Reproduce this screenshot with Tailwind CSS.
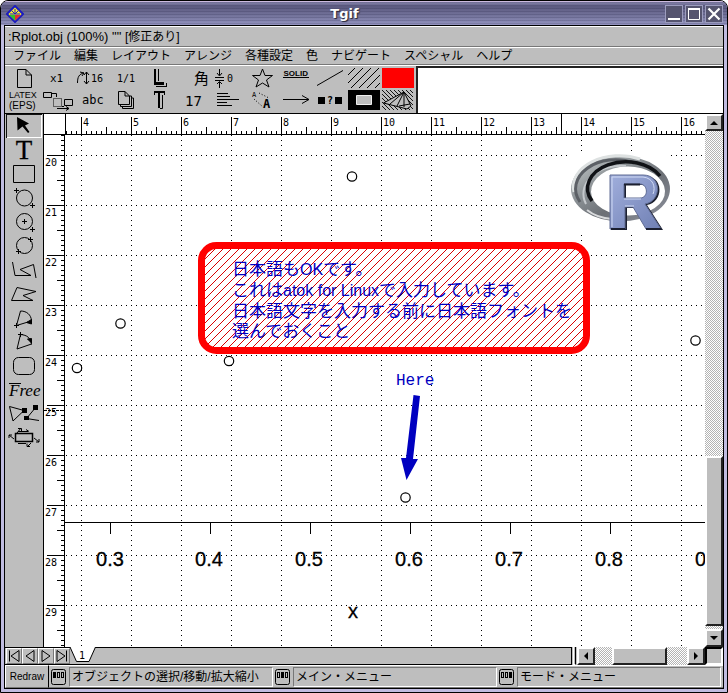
<!DOCTYPE html>
<html lang="ja">
<head>
<meta charset="utf-8">
<title>Tgif</title>
<script src="https://cdn.jsdelivr.net/npm/@tailwindcss/browser@4"></script>
</head>
<body class="bg-white font-['Liberation_Sans','Noto_Sans_CJK_JP',sans-serif] text-black">
<div class="flex h-screen flex-col overflow-hidden rounded-t-lg border border-black bg-[#c0bce0]">

<!-- title bar -->
<header class="flex h-6 shrink-0 items-center border-t border-[#cdbbe0] bg-[repeating-linear-gradient(to_bottom,#00002022_0_1px,transparent_1px_3px),linear-gradient(to_bottom,#8886ae,#5c5a80_20%,#74749c_60%,#9494c0)] px-1">
  <svg class="ml-px h-[18px] w-[18px] shrink-0" viewBox="0 0 18 18"><path d="M9 1L17 9L9 17L1 9Z" fill="#f8ec30" stroke="#1c1cc0" stroke-width="2"/><path d="M3 10H9V15.500Z" fill="#30c030"/><path d="M9 10H15L9 15.500Z" fill="#e03030"/><path d="M9 4V9M4 9H14M6 6L9 9L12 6" fill="none" stroke="#1c1cc0"/></svg>
  <h1 class="flex-1 text-center font-['DejaVu_Sans',sans-serif] text-[13px] leading-5 font-bold text-white [text-shadow:1px_1px_1px_#223]">Tgif</h1>
  <div class="flex gap-0.5">
    <button aria-label="Minimize" class="h-[18px] w-[18px] border border-[#9c9cbe] bg-[#55546f]"><svg viewBox="0 0 16 16"><path d="M2 13H14" stroke="#fff" stroke-width="2"/></svg></button>
    <button aria-label="Maximize" class="h-[18px] w-[18px] border border-[#9c9cbe] bg-[#55546f]"><svg viewBox="0 0 16 16"><path d="M2.500 3H13.500V13.500H2.500Z" fill="none" stroke="#fff"/><path d="M2 3H14" stroke="#fff" stroke-width="2"/></svg></button>
    <button aria-label="Close" class="h-[18px] w-[18px] border border-[#9c9cbe] bg-[#55546f]"><svg viewBox="0 0 16 16"><path d="M2.500 2.500L13.500 13.500M13.500 2.500L2.500 13.500" stroke="#fff" stroke-width="2.200"/></svg></button>
  </div>
</header>

<div class="mx-[3px] mb-[3px] flex min-h-0 flex-1 flex-col border border-black bg-[#bebebe]">

  <div class="flex h-[21px] shrink-0 items-center border-t border-b border-t-white border-b-[#777] px-[3px] text-[13px] whitespace-pre">:Rplot.obj (100%) "" <span class="text-xs">[修正あり]</span></div>

  <nav class="flex h-[18px] shrink-0 items-center gap-[13px] border-t border-b border-t-white border-b-[#777] px-2 text-xs">
    <button>ファイル</button><button>編集</button><button>レイアウト</button><button>アレンジ</button><button>各種設定</button><button>色</button><button>ナビゲート</button><button>スペシャル</button><button>ヘルプ</button>
  </nav>

  <!-- choice icons and message area -->
  <div class="flex h-12 shrink-0 border-t border-white">
    <div class="grid shrink-0 grid-cols-[repeat(12,34px)] content-start pt-px pl-0.5 pr-px font-['DejaVu_Sans_Mono',monospace] [&_svg]:block [&_svg]:h-[22px] [&_svg]:w-[34px] [&_svg]:overflow-visible">
      <button aria-label="New"><svg viewBox="7 67 34 22" fill="none" stroke="#000"><path d="M17.500 69.500H26L31.500 75V87.500H17.500ZM26 69.500V75H31.500"/></svg></button>
      <button aria-label="Zoom"><svg viewBox="41 67 34 22"><text x="50" y="82" font-size="11">x1</text></svg></button>
      <button aria-label="Move"><svg viewBox="75 67 34 22"><path d="M77.500 83C77.500 77 79 74 84 73M80 72L84 73L82 76M86.500 72V84M84 75L86.500 72L89 75M84 81L86.500 84L89 81" fill="none" stroke="#000"/><text x="91" y="82" font-size="10">16</text></svg></button>
      <button aria-label="Page"><svg viewBox="109 67 34 22"><text x="117" y="82" font-size="10">1/1</text></svg></button>
      <button aria-label="Landscape"><svg viewBox="143 67 34 22"><path d="M154 69H156V82H164V85H154Z"/><path d="M158.500 69V81M156 86.500H167M166.500 83V87" stroke="#000" fill="none"/></svg></button>
      <button aria-label="Font"><svg viewBox="177 67 34 22"><text x="194" y="84" font-size="15" font-family="Noto Sans CJK JP">角</text></svg></button>
      <button aria-label="Vertical space"><svg viewBox="211 67 34 22"><path d="M219.500 69V75M217 73L219.500 76L222 73M215 77.500H224M215 80.500H224M219.500 88V82M217 84L219.500 81.500L222 84" fill="none" stroke="#000"/><text x="227" y="82" font-size="10">0</text></svg></button>
      <button aria-label="Shape"><svg viewBox="245 67 34 22"><path d="M262.500 69L265 75.500H272.500L266.500 80L269 87L262.500 83L256 87L258.500 80L252.500 75.500H260Z" fill="none" stroke="#000"/></svg></button>
      <button aria-label="Line type"><svg viewBox="279 67 34 22"><text x="283.500" y="76" font-size="8" font-weight="bold" font-family="Liberation Sans">SOLID</text><path d="M283 77.500H309" stroke="#000"/></svg></button>
      <button aria-label="Line width"><svg viewBox="313 67 34 22"><path d="M317 85.500L343 70.500" stroke="#000"/></svg></button>
      <button aria-label="Fill pattern"><svg viewBox="347 67 34 22"><path d="M348 75L355 68M348 83L363 68M351 88L371 68M359 88L379 68M367 88L380 75M375 88L380 83" fill="none" stroke="#000"/></svg></button>
      <button aria-label="Color"><svg viewBox="381 67 34 22"><path d="M382 68H414V88H382Z" fill="#f00"/></svg></button>

      <button aria-label="Export format"><svg viewBox="7 89 34 22" font-family="Liberation Sans"><text x="9" y="98" font-size="9">LATEX</text><text x="9" y="109" font-size="10">(EPS)</text></svg></button>
      <button aria-label="Move mode"><svg viewBox="41 89 34 22" fill="none" stroke="#000"><path d="M43.500 92.500H51.500V97.500H43.500ZM52 93.500H56.500V97M64.500 99.500H72.500V105.500H64.500ZM57 108.500H69M66 106.500L69 108.500L66 110.500M62 106.500H64"/><path d="M53.500 98.500H61.500V106.500H53.500Z" stroke-dasharray="1 1"/></svg></button>
      <button aria-label="Text"><svg viewBox="75 89 34 22"><text x="82" y="104" font-size="12">abc</text></svg></button>
      <button aria-label="Stacking"><svg viewBox="109 89 34 22" fill="none" stroke="#000"><path d="M118.500 91.500H125L129.500 96V104.500H118.500ZM125 91.500V96H129.500M120.500 105V106.500H131.500V96H130M122.500 107V108.500H133.500V98H132"/></svg></button>
      <button aria-label="Text orientation"><svg viewBox="143 89 34 22"><path d="M154 91H165V93H154ZM158 91H160V108H158Z"/><path d="M154.500 93V95M164.500 91V95M162.500 95V108.500H160" fill="none" stroke="#000"/></svg></button>
      <button aria-label="Font size"><svg viewBox="177 89 34 22"><text x="185" y="106" font-size="14">17</text></svg></button>
      <button aria-label="Align"><svg viewBox="211 89 34 22"><path d="M217 93.500H228M217 96.500H230M217 99.500H239M217 102.500H227M217 105.500H232" stroke="#000"/></svg></button>
      <button aria-label="Rotate text"><svg viewBox="245 89 34 22"><text x="252" y="97" font-size="7">A</text><text x="263" y="108" font-size="12" font-weight="bold">A</text><path d="M259 93L269 98M254 99L263 107" stroke="#000" stroke-dasharray="1 2"/></svg></button>
      <button aria-label="Arrow style"><svg viewBox="279 89 34 22"><path d="M283 99.500H309M302 95.500L309 99.500L302 103.500" fill="none" stroke="#000"/></svg></button>
      <button aria-label="Dash"><svg viewBox="313 89 34 22"><path d="M318 97H325V104H318ZM335 97H342V104H335Z"/><text x="327" y="104" font-size="10" font-weight="bold">?</text></svg></button>
      <button aria-label="Line pattern"><svg viewBox="347 89 34 22"><path d="M348 90H380V110H348Z"/><path d="M356.500 95.500H371.500V104.500H356.500Z" fill="#bebebe" stroke="#eee"/></svg></button>
      <button aria-label="Pattern"><svg viewBox="381 89 34 22"><defs><pattern id="bk" width="4" height="4" patternUnits="userSpaceOnUse"><path d="M-1 -1L5 5M-1 3L1 5M3 -1L5 1" stroke="#000" stroke-width=".9"/></pattern></defs><path d="M382 90H413V110H382Z" fill="url(#bk)"/><path d="M383.500 103L404 92L411 106L407 109Z" fill="#bebebe" stroke="#000"/><path d="M404 92L390 104M404 92L397 106M404 92V107M399 106L410 104" stroke="#000"/></svg></button>
    </div>
    <div class="flex-1 border-t-2 border-l-2 border-[#222] bg-white"></div>
  </div>

  <div class="flex min-h-0 flex-1 border-t border-black">
    <!-- tool panel -->
    <aside class="flex w-[39px] shrink-0 flex-col border-r border-black pl-px [&_button]:block [&_button]:shrink-0 [&_svg]:block [&_svg]:h-6 [&_svg]:w-9 [&_svg]:overflow-visible">
      <button aria-label="Select" class="w-9 shadow-[inset_1px_1px_0_#111,inset_-1px_-1px_0_#fff]"><svg viewBox="6 114 36 24"><path d="M17 117L29 123.500L25 125.500L29.500 132L28 133L22.500 126.500L17.500 130.500Z"/></svg></button>
      <button aria-label="Text tool"><svg viewBox="6 138 36 24"><text x="24" y="159" font-size="27" text-anchor="middle" font-family="Liberation Serif" stroke="#000" stroke-width=".3">T</text></svg></button>
      <button aria-label="Rectangle"><svg viewBox="6 162 36 24"><path d="M13.500 165.500H34.500V182.500H13.500Z" fill="none" stroke="#000"/></svg></button>
      <button aria-label="Oval by corners"><svg viewBox="6 186 36 24" fill="none" stroke="#000"><circle cx="24.500" cy="198" r="8"/><path d="M14 190.500H19M16.500 188V193M30 205.500H35M32.500 203V208"/></svg></button>
      <button aria-label="Oval by centre"><svg viewBox="6 210 36 24" fill="none" stroke="#000"><circle cx="24.500" cy="221.500" r="8"/><path d="M22 221.500H27M24.500 219V224M30 229.500H35M32.500 227V232"/></svg></button>
      <button aria-label="Oval by edges"><svg viewBox="6 234 36 24" fill="none" stroke="#000"><circle cx="24.500" cy="245.500" r="8"/><path d="M28 239.500H33M30.500 237V242M16 251.500H21M18.500 249V254"/></svg></button>
      <button aria-label="Polyline"><svg viewBox="6 258 36 24" fill="none" stroke="#000"><path d="M12.500 262L15 275.500H31L20 269.500L33.500 264.500L36 278"/></svg></button>
      <button aria-label="Polygon"><svg viewBox="6 282 36 24" fill="none" stroke="#000"><path d="M17 287.500L36 291.500L23 295.500L33 300.500H11.500Z"/></svg></button>
      <button aria-label="Arc by centre"><svg viewBox="6 306 36 24" fill="none" stroke="#000"><path d="M16.500 325.500L20.500 311C27 311 31 315 31.500 320.500M16.500 325.500L28 322M14 325.500H19M16.500 323V328"/><path d="M31.500 324L26.500 322.500L31.500 319.500Z" fill="#000"/></svg></button>
      <button aria-label="Arc by edge"><svg viewBox="6 330 36 24" fill="none" stroke="#000"><path d="M31.500 344L17 349L20.500 334.500C27 335 31 338 31.500 344.500M18 334.500H23M20.500 332V337"/><path d="M27.500 339L31.500 338.500V343Z" fill="#000"/></svg></button>
      <button aria-label="Rounded rectangle"><svg viewBox="6 354 36 24"><rect x="13.500" y="357.500" width="21" height="17" rx="5" fill="none" stroke="#000"/></svg></button>
      <button aria-label="Freehand"><svg viewBox="6 378 36 24"><text x="9" y="396" font-size="17" font-style="italic" font-family="Liberation Serif">Free</text><path d="M9 383.500H21" stroke="#000"/></svg></button>
      <button aria-label="Edit points"><svg viewBox="6 402 36 24"><path d="M9.500 406.500L24 410.500L13 421ZM36 407L26.500 418.500L39 420.500" fill="none" stroke="#000"/><path d="M22 408H27V413H22ZM33 405H38V410H33ZM24 416H29V420H24Z"/></svg></button>
      <button aria-label="Rotate or shear"><svg viewBox="6 426 36 24" fill="none" stroke="#000"><path d="M15.500 433.500H32.500V441.500H15.500Z" stroke-width="1.500"/><path d="M9 435L14 439M9 438V435H12M34 438L39 442M36 442H39V439M18 431.500H28M26 429.500L29 431.500M18 443.500H26M17 433L21 428M18 428.500H21.500V431M27 447L31 443M27 443.500V446.500H30"/></svg></button>
    </aside>

    <div class="flex min-w-0 flex-1 flex-col font-['DejaVu_Sans_Mono',monospace] text-[10px]">
      <!-- horizontal ruler -->
      <div class="flex h-[21px] shrink-0 border-b border-black bg-white">
        <svg class="ml-[21px] h-5 min-w-0 flex-1" shape-rendering="crispEdges">
          <defs><pattern id="hr" x="81" y="114" width="50" height="20" patternUnits="userSpaceOnUse"><path d="M.5 3V20M5.500 17V20M10.500 17V20M15.500 17V20M20.500 17V20M25.500 13V20M30.500 17V20M35.500 17V20M40.500 17V20M45.500 17V20" stroke="#000"/></pattern></defs>
          <g transform="translate(-65 -114)"><rect x="65" y="114" width="3000" height="20" fill="url(#hr)"/><path d="M65.500 114V134M561.500 114V131" stroke="#000"/>
          <text y="126"><tspan x="83">4</tspan><tspan x="133">5</tspan><tspan x="183">6</tspan><tspan x="233">7</tspan><tspan x="283">8</tspan><tspan x="333">9</tspan><tspan x="383">10</tspan><tspan x="433">11</tspan><tspan x="483">12</tspan><tspan x="533">13</tspan><tspan x="583">14</tspan><tspan x="633">15</tspan><tspan x="683">16</tspan></text></g>
        </svg>
      </div>
      <div class="flex min-h-0 flex-1 bg-white">
        <!-- vertical ruler -->
        <svg class="h-full w-[21px] shrink-0" shape-rendering="crispEdges">
          <defs><pattern id="vr" x="44" y="155" width="21" height="50" patternUnits="userSpaceOnUse"><path d="M3 .5H20M17 5.500H20M17 10.500H20M17 15.500H20M17 20.500H20M13 25.500H20M17 30.500H20M17 35.500H20M17 40.500H20M17 45.500H20" stroke="#000"/></pattern></defs>
          <g transform="translate(-44 -135)"><rect x="44" y="135" width="21" height="3000" fill="url(#vr)"/><path d="M64.500 135V3000" stroke="#000"/><path d="M44 410.500H64" stroke="#000" stroke-dasharray="3 1"/>
          <text><tspan x="45" y="166">20</tspan><tspan x="45" y="216">21</tspan><tspan x="45" y="266">22</tspan><tspan x="45" y="316">23</tspan><tspan x="45" y="366">24</tspan><tspan x="45" y="416">25</tspan><tspan x="45" y="466">26</tspan><tspan x="45" y="516">27</tspan><tspan x="45" y="566">28</tspan><tspan x="45" y="616">29</tspan></text></g>
        </svg>
        <!-- drawing -->
        <svg class="h-full min-w-0 flex-1">
          <defs>
            <pattern id="gh" x="66" y="155" width="5" height="50" patternUnits="userSpaceOnUse"><rect width="1" height="1"/></pattern>
            <pattern id="gv" x="81" y="140" width="50" height="5" patternUnits="userSpaceOnUse"><rect width="1" height="1"/></pattern>
            <pattern id="ht" width="8" height="8" patternUnits="userSpaceOnUse"><path d="M7 0h1v1h-1zM6 1h1v1h-1zM5 2h1v1h-1zM4 3h1v1h-1zM3 4h1v1h-1zM2 5h1v1h-1zM1 6h1v1h-1zM0 7h1v1h-1z" fill="#d80000"/></pattern>
            <linearGradient id="ring" x1="0" y1="0" x2="1" y2="1"><stop offset="0" stop-color="#ccd0d0"/><stop offset=".35" stop-color="#8c9296"/><stop offset=".6" stop-color="#6c7076"/><stop offset="1" stop-color="#9094a0"/></linearGradient>
            <linearGradient id="rf" x1="0" y1="0" x2="1" y2="1"><stop offset="0" stop-color="#a0aedc"/><stop offset="1" stop-color="#7080b4"/></linearGradient>
          </defs>
          <g transform="translate(-65 -135)">
            <g shape-rendering="crispEdges"><rect x="65" y="135" width="3000" height="3000" fill="url(#gh)"/><rect x="65" y="135" width="3000" height="3000" fill="url(#gv)"/></g>
            <rect x="568" y="153" width="103" height="82" fill="#fff"/>
            <!-- R emblem -->
            <path fill-rule="evenodd" fill="url(#ring)" d="M571 189A49.500 33 0 0 1 670 189A49.500 32.500 0 0 1 571 189ZM591 192A37 24 0 0 0 665 191A37 25 0 0 0 591 192Z"/>
            <path d="M574 192A46 31 0 0 1 640 159" fill="none" stroke="#dde1e1" stroke-width="3"/>
            <path d="M580 202A40 29 0 0 1 634 163" fill="none" stroke="#5c6066" stroke-width="3"/>
            <path d="M586 204A38 28 0 0 1 626 166" fill="none" stroke="#c4c8cc" stroke-width="2"/>
            <path d="M592 201A36 25 0 0 1 660 176" fill="none" stroke="#101216" stroke-width="3.500"/>
            <path d="M587 210Q597 218 612 219" fill="none" stroke="#d8dadc" stroke-width="2"/>
            <path transform="translate(2 1)" fill-rule="evenodd" fill="#1c2030" d="M610 175H643C662 175 662 201 645 204L661 229H646L633 207H625V229H610ZM624 184V198H640C649 198 648 184 640 184Z"/>
            <path fill-rule="evenodd" fill="url(#rf)" stroke="#606c94" d="M610 175H643C662 175 662 201 645 204L661 229H646L633 207H625V229H610ZM624 184V198H640C649 198 648 184 640 184Z"/>
            <path d="M612 227V177H643C653 178 656 187 653 194M625 206H634M624 199H641" fill="none" stroke="#d0daf4"/>
            <path d="M611 229H625M646 229H661M624 184.500H640" stroke="#1c2030" stroke-width="2"/>

            <path d="M65 522.500H3000M110.500 522V534M210.500 522V534M310.500 522V534M410.500 522V534M510.500 522V534M610.500 522V534" stroke="#000"/>
            <g fill="#fff" stroke="#000" stroke-width="1.200"><circle cx="352" cy="176.500" r="4.700"/><circle cx="120.500" cy="323.500" r="4.700"/><circle cx="77" cy="368" r="4.700"/><circle cx="229" cy="361" r="4.700"/><circle cx="695.500" cy="340.500" r="4.700"/><circle cx="405.500" cy="497.500" r="4.700"/></g>

            <rect x="201.500" y="245.500" width="385" height="105" rx="15" fill="#fff"/>
            <rect x="201.500" y="245.500" width="385" height="105" rx="15" fill="url(#ht)" shape-rendering="crispEdges"/>
            <rect x="201.500" y="245.500" width="385" height="105" rx="15" fill="none" stroke="#f00" stroke-width="7"/>
            <g fill="#0000c0" font-size="17" font-family="Liberation Sans, Noto Sans CJK JP, sans-serif"><text x="232" y="275">日本語も<tspan font-size="16">OK</tspan>です。</text><text x="232" y="296">これは<tspan font-size="16">atok for Linux</tspan>で入力しています。</text><text x="232" y="317">日本語文字を入力する前に日本語フォントを</text><text x="232" y="337">選んでおくこと</text></g>
            <text x="396" y="385" font-size="16" font-family="Liberation Mono, monospace" fill="#0000c0">Here</text>
            <path d="M413.500 395L420 396L413 459H418L406.500 480L401 458H406Z" fill="#0000c0"/>

            <g font-size="20" font-family="Liberation Sans, sans-serif" text-anchor="middle" stroke="#000" stroke-width=".3"><text x="110" y="566">0.3</text><text x="209" y="566">0.4</text><text x="309" y="566">0.5</text><text x="409" y="566">0.6</text><text x="509" y="566">0.7</text><text x="609" y="566">0.8</text><text x="709" y="566">0.9</text><text x="353" y="618">x</text></g>
          </g>
        </svg>
      </div>
    </div>

    <!-- vertical scrollbar -->
    <div class="flex w-[18px] shrink-0 flex-col gap-[3px] bg-[repeating-conic-gradient(#b4b4b4_0_25%,#fff_0_50%)] bg-[length:2px_2px]">
      <button aria-label="Scroll up" class="flex h-[17px] w-[18px] shrink-0 items-center justify-center border-2 border-white border-r-[#222] border-b-[#222] bg-[#bebebe]"><svg class="h-1 w-2" viewBox="0 0 8 4"><path d="M0 4L4 0L8 4Z"/></svg></button>
      <div class="flex-[324]"></div>
      <div class="flex-[168] border-2 border-white border-r-[#222] border-b-[#222] bg-[#bebebe]"></div>
      <button aria-label="Scroll down" class="flex h-[18px] w-[18px] shrink-0 items-center justify-center border-2 border-white border-r-[#222] border-b-[#222] bg-[#bebebe]"><svg class="h-1 w-2" viewBox="0 0 8 4"><path d="M0 0L4 4L8 0Z"/></svg></button>
    </div>
  </div>

  <!-- page tabs and horizontal scrollbar -->
  <div class="flex h-[18px] shrink-0">
    <div class="flex min-w-0 flex-1 border-t border-r border-b border-black pl-px [&_button]:h-4 [&_button]:w-4 [&_button]:border [&_button]:border-white [&_button]:border-r-[#777] [&_button]:border-b-[#777] [&_button_svg]:fill-none [&_button_svg]:stroke-black">
      <button aria-label="First page"><svg viewBox="0 0 14 14"><path d="M2.500 1.500V12.500M12 1.500V12.500L4 7Z"/></svg></button>
      <button aria-label="Previous page"><svg viewBox="0 0 14 14"><path d="M11 1.500V12.500L3 7Z"/></svg></button>
      <button aria-label="Next page"><svg viewBox="0 0 14 14"><path d="M3 1.500V12.500L11 7Z"/></svg></button>
      <button aria-label="Last page"><svg viewBox="0 0 14 14"><path d="M2 1.500V12.500L10 7ZM11.500 1.500V12.500"/></svg></button>
      <svg class="-mt-px h-[15px] w-[26px]" viewBox="0 0 26 15"><path d="M0 0L6.500 14.500H19L25.500 0" fill="#fff" stroke="#000"/><text x="9" y="12" font-size="10" font-family="DejaVu Sans Mono">1</text></svg>
    </div>
    <div class="mx-px w-[3px] border border-t-0 border-white border-r-black"></div>
    <div class="flex w-[128px] shrink-0 justify-between bg-[repeating-conic-gradient(#b4b4b4_0_25%,#fff_0_50%)] bg-[length:2px_2px]">
      <button aria-label="Scroll left" class="flex h-[18px] w-[18px] items-center justify-center border-2 border-white border-r-[#222] border-b-[#222] bg-[#bebebe]"><svg class="h-2 w-1" viewBox="0 0 4 8"><path d="M4 0L0 4L4 8Z"/></svg></button>
      <div class="mr-1 w-[55px] border-2 border-white border-r-[#222] border-b-[#222] bg-[#bebebe]"></div>
      <button aria-label="Scroll right" class="flex h-[18px] w-[18px] items-center justify-center border-2 border-white border-r-[#222] border-b-[#222] bg-[#bebebe]"><svg class="h-2 w-1" viewBox="0 0 4 8"><path d="M0 0L4 4L0 8Z"/></svg></button>
    </div>
    <div class="w-[18px] border-2 border-black border-r-white border-b-white"></div>
  </div>

  <!-- status bar -->
  <footer class="flex h-[23px] shrink-0 text-xs [&_p]:h-5 [&_p]:min-w-0 [&_p]:flex-1 [&_p]:overflow-hidden [&_p]:border [&_p]:border-[#777] [&_p]:border-r-white [&_p]:border-b-white [&_p]:pl-0.5 [&_p]:leading-[18px] [&_p]:whitespace-nowrap">
    <button class="w-[44px] shrink-0 border border-white border-r-black border-b-[#777] text-[10px]">Redraw</button>
    <div class="flex flex-1 items-center gap-0.5 border-t border-b border-t-white border-b-[#777] px-0.5 min-w-0">
      <svg class="h-4 w-4 shrink-0" viewBox="0 0 16 16"><rect x=".5" y=".5" width="14" height="15" rx="2" fill="none" stroke="#000"/><path d="M2 3h3v6h-3zM6 3h3v6h-3zM10 3h3v6h-3z"/><path d="M7.500 4v4M11.500 4v4" stroke="#bebebe"/></svg>
      <p>オブジェクトの選択/移動/拡大縮小</p>
      <svg class="h-4 w-4 shrink-0" viewBox="0 0 16 16"><rect x=".5" y=".5" width="14" height="15" rx="2" fill="none" stroke="#000"/><path d="M2 3h3v6h-3zM6 3h3v6h-3zM10 3h3v6h-3z"/><path d="M3.500 4v4M11.500 4v4" stroke="#bebebe"/></svg>
      <p>メイン・メニュー</p>
      <svg class="h-4 w-4 shrink-0" viewBox="0 0 16 16"><rect x=".5" y=".5" width="14" height="15" rx="2" fill="none" stroke="#000"/><path d="M2 3h3v6h-3zM6 3h3v6h-3zM10 3h3v6h-3z"/><path d="M3.500 4v4M7.500 4v4" stroke="#bebebe"/></svg>
      <p>モード・メニュー</p>
    </div>
  </footer>
</div>
</div>
</body>
</html>
